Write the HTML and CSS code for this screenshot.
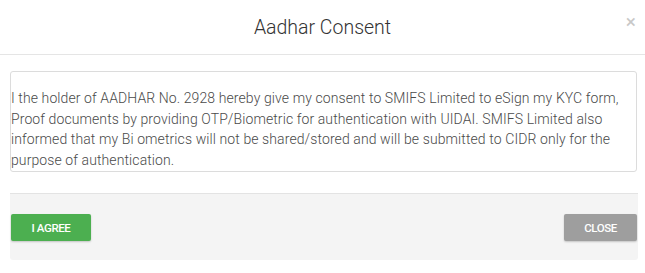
FILE: index.html
```html
<!DOCTYPE html>
<html>
<head>
<meta charset="utf-8">
<link rel="stylesheet" href="styles.css">
</head>
<body>
<div class="modal">
  <div class="modal-header">
    <h4 class="modal-title">Aadhar Consent</h4>
    <span class="close">×</span>
  </div>
  <div class="modal-body">
    <div class="consent-box">I the holder of AADHAR No. 2928 hereby give my consent to SMIFS Limited to eSign my KYC form, Proof documents by providing OTP/Biometric for authentication with UIDAI. SMIFS Limited also informed that my Bi ometrics will not be shared/stored and will be submitted to CIDR only for the purpose of authentication.</div>
    <div class="modal-footer">
      <button class="btn btn-agree">I AGREE</button>
      <button class="btn btn-close">CLOSE</button>
    </div>
  </div>
</div>
</body>
</html>
```

FILE: styles.css
```css
html, body {
  margin: 0;
  padding: 0;
  background: #ffffff;
}
body {
  font-family: Roboto, "Noto Sans", sans-serif;
  color: #555;
}
.modal {
  width: 645px;
}
.modal-header {
  position: relative;
  height: 55px;
  border-bottom: 1px solid #e5e5e5;
  display: flex;
  align-items: center;
  justify-content: center;
  box-sizing: border-box;
}
.modal-title {
  margin: 0;
  font-size: 19.5px;
  font-weight: 300;
  color: #333;
}
.close {
  position: absolute;
  right: 9px;
  top: 12px;
  font-size: 19px;
  line-height: 20px;
  color: #c8c8c8;
  font-weight: 400;
}
.modal-body {
  padding: 16px 8px 12px 10px;
}
.consent-box {
  border: 1px solid #dcdcdc;
  border-radius: 3px;
  padding: 16px 8px 0 0;
  box-sizing: border-box;
  height: 101px;
  font-size: 14px;
  letter-spacing: 0.1px;
  line-height: 20.5px;
  font-weight: 300;
  color: #4a4a4a;
}
.modal-footer {
  margin-top: 21px;
  margin-right: -1px;
  background: #f4f4f4;
  border-top: 1px solid #e3e3e3;
  border-radius: 0 0 3px 3px;
  height: 67px;
  box-sizing: border-box;
  padding: 20px 1px 0 1px;
  display: flex;
  justify-content: space-between;
  align-items: flex-start;
}
.btn {
  border: none;
  border-radius: 2px;
  height: 27px;
  color: #fff;
  font-family: Roboto, sans-serif;
  font-weight: 500;
  font-size: 11.5px;
  letter-spacing: -0.4px;
  box-shadow: 0 1px 2px rgba(0,0,0,0.2);
  padding: 0;
}
.btn-agree {
  width: 80px;
  background: #4caf50;
}
.btn-close {
  width: 73px;
  background: #9e9e9e;
}
```
